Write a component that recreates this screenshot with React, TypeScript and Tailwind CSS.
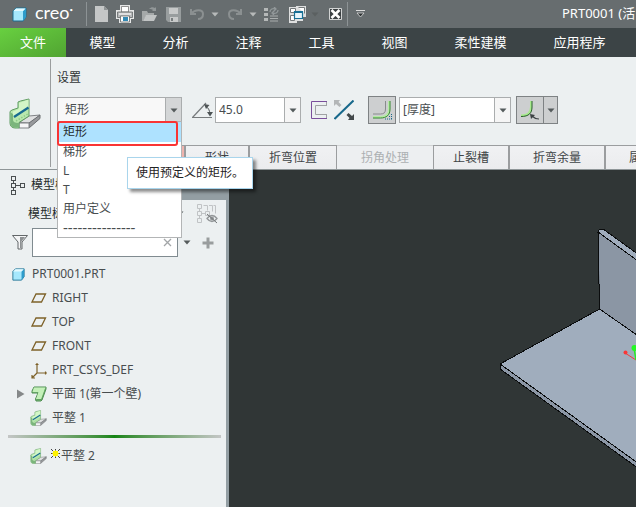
import type { ReactNode } from "react";

function Caret({ className = "text-[#555b5c]" }: { className?: string }) {
  return (
    <svg width="8" height="5" viewBox="0 0 8 5" className={className} aria-hidden="true">
      <path d="M0.5 0.5h7L4 4.5z" fill="currentColor" />
    </svg>
  );
}

function Tool({ label, children }: { label: string; children: ReactNode }) {
  return (
    <button type="button" aria-label={label} className="flex h-6 w-6 shrink-0 items-center justify-center">
      {children}
    </button>
  );
}

function More({ label, className }: { label: string; className: string }) {
  return (
    <button type="button" aria-label={label} className="flex h-6 w-3 shrink-0 items-center justify-center">
      <Caret className={className} />
    </button>
  );
}

function Cube({ size }: { size: number }) {
  return (
    <svg width={size} height={size} viewBox="0 0 15 15" aria-hidden="true" className="shrink-0">
      <path d="M1 4l3-3h10v9l-3 4H1z" fill="#a6e8fd" stroke="#1d6d8f" strokeWidth="1" strokeLinejoin="round" />
      <path d="M11 4l3-3v9l-3 4z" fill="#2e9ccb" />
      <path d="M1.500 4L4 1.500h9.500L11 4z" fill="#e4faff" />
    </svg>
  );
}

function FlatWall({ width, height }: { width: number; height: number }) {
  return (
    <svg width={width} height={height} viewBox="0 0 32 31" aria-hidden="true" className="shrink-0" strokeLinejoin="round">
      <path d="M10 24.500L20 18l11-1-10 8z" fill="#dfe0e1" stroke="#808386" />
      <path d="M20 25l11-8v3.500L20 30z" fill="#97999c" stroke="#6b6e71" />
      <path d="M10 25h10v5H10z" fill="#f6f6f7" stroke="#808386" />
      <path d="M1 13.500l2-1.500 6-2V4l2.500-1L20 1v17l-10 6.500V30H6c-3 0-5-2-5-5z" fill="#b9e8ae" stroke="#5f9c62" />
      <path d="M10 5l9.500-3.500V10L4 18v-4.500L10 11z" fill="#d3f6c7" />
      <path d="M1.500 14.500L4 16v6c0 2 2 3 6 3v4.500H6c-3 0-4.500-2-4.500-5z" fill="#7bb57c" />
      <path d="M5 19l14.500-9.500" stroke="#176b91" strokeWidth="2.200" />
      <path d="M7 23l12-7" stroke="#8fcb8a" strokeDasharray="1.500 1.500" strokeWidth="1.500" />
    </svg>
  );
}

function Plane() {
  return (
    <svg width="16" height="12" viewBox="0 0 16 12" aria-hidden="true" className="ml-px">
      <path d="M1 10L5 2h9.500l-4 8z" fill="none" stroke="#7d6128" strokeWidth="1.300" />
    </svg>
  );
}

function Csys() {
  return (
    <svg width="17" height="17" viewBox="0 0 17 17" aria-hidden="true" fill="none" stroke="#7d6128" strokeWidth="1.200" className="ml-px">
      <path d="M6 1v10h10M6 11L1 16M4.500 2.500h3M14.500 9.500v3M1 13v3h3" />
    </svg>
  );
}

function FirstWall() {
  return (
    <svg width="16" height="16" viewBox="0 0 16 16" aria-hidden="true" strokeLinejoin="round">
      <path d="M3 1h12v2l-4 11-1 1H5l-.5-2L7 7H1V5z" fill="#7dbb7b" stroke="#4d8c50" />
      <path d="M3 1.500h11.500L10.500 13H5l2.500-7H1.500z" fill="#c4f0b9" />
      <path d="M14.500 2.500L10.500 13.500H5.500" fill="none" stroke="#589a58" strokeWidth="0.800" />
    </svg>
  );
}

function Twisty() {
  return (
    <svg width="8" height="10" viewBox="0 0 8 10" aria-hidden="true">
      <path d="M0 0.500v9L7.500 5z" fill="#858889" />
    </svg>
  );
}

function NewMark() {
  return (
    <svg width="9" height="9" viewBox="0 0 9 9" aria-hidden="true" className="-mt-1.5 mr-px shrink-0" shapeRendering="crispEdges">
      <path d="M2 2h5v5H2z" fill="#fff200" />
      <path d="M0 0h1v1H0zM4 0h1v1H4zM8 0h1v1H8zM1 1h1v1H1zM7 1h1v1H7zM0 4h1v1H0zM8 4h1v1H8zM1 7h1v1H1zM7 7h1v1H7zM0 8h1v1H0zM4 8h1v1H4zM8 8h1v1H8z" fill="#444" />
      <path d="M4 1h1v1H4zM1 4h1v1H1zM7 4h1v1H7zM4 7h1v1H4z" fill="#c9bf00" />
    </svg>
  );
}

function TreeIcon() {
  return (
    <svg width="14" height="19" viewBox="0 0 14 19" aria-hidden="true" fill="none" stroke="#4b5052" shapeRendering="crispEdges">
      <path d="M0.500 0.500h4v4h-4zM0.500 7.500h4v4h-4zM0.500 14.500h4v4h-4zM9.500 7.500h4v4h-4zM2.500 5v2M2.500 12v2M5 9.500h4" />
    </svg>
  );
}

function TitleBar() {
  return (
    <header className="flex h-7 shrink-0 items-center overflow-hidden bg-[#676d6f] pl-3">
      <Cube size={15} />
      <div className="ml-2 h-7 w-11 shrink-0 font-[Lato] text-lg leading-6 text-white">
        creo<span className="align-super text-[6px] leading-none">•</span>
      </div>
      <div className="ml-[7px] mr-0.5 h-6 w-px shrink-0 bg-[#8d9395]" />
      <Tool label="新建">
        <svg width="13" height="16" viewBox="0 0 13 16"><path d="M0 0h9l4 4v12H0z" fill="#c5c7c7" /><path d="M9 0v4h4z" fill="#8f9495" /></svg>
      </Tool>
      <Tool label="打印">
        <svg width="18" height="18" viewBox="0 0 18 18">
          <path d="M4 0h10v5h4v9h-3v4H3v-4H0V5h4z" fill="#e6e7e7" />
          <path d="M5.500 1.500h7V7h-7z" fill="#fff" stroke="#777" strokeWidth="0.800" />
          <path d="M1.500 7h15v5.500h-15z" fill="#b7b9ba" stroke="#666a6b" strokeWidth="0.800" />
          <path d="M3 9h12" stroke="#eee" strokeWidth="1.500" />
          <path d="M4.500 11h9v6h-9z" fill="#fff" stroke="#666a6b" strokeWidth="0.800" />
          <path d="M7 12h5v4H7z" fill="#3289b4" />
        </svg>
      </Tool>
      <Tool label="打开">
        <svg width="17" height="16" viewBox="0 0 17 16">
          <path d="M1 15V5h5l1 2h6v3H5l-3 5z" fill="#a5a9a9" /><path d="M5 9h11l-3 6H2z" fill="#c1c4c4" />
          <path d="M8 3c2-2 4-2 6-1l1-1v4h-4l1-1c-1-1-2-1-4-1z" fill="#929798" />
        </svg>
      </Tool>
      <Tool label="保存">
        <svg width="15" height="15" viewBox="0 0 15 15"><path d="M0 0h15v15H2l-2-2z" fill="#989d9e" /><path d="M3 1h9v6H3z" fill="#c7c9c9" /><path d="M4 10h8v5H4z" fill="#c7c9c9" /><path d="M5 11h2v3H5z" fill="#777d7e" /></svg>
      </Tool>
      <Tool label="撤消">
        <svg width="16" height="12" viewBox="0 0 16 12" fill="none" stroke="#8b9091" strokeWidth="2"><path d="M2 1v5h5M2.500 5.500C6 1 14 1 14 6c0 3-2 5-5 5" /></svg>
      </Tool>
      <More label="撤消列表" className="text-[#b7baba]" />
      <div className="w-0.5 shrink-0" />
      <Tool label="重做">
        <svg width="16" height="12" viewBox="0 0 16 12" fill="none" stroke="#8b9091" strokeWidth="2"><path d="M14 1v5H9M13.500 5.500C10 1 2 1 2 6c0 3 2 5 5 5" /></svg>
      </Tool>
      <More label="重做列表" className="text-[#b7baba]" />
      <Tool label="重新生成">
        <svg width="15" height="15" viewBox="0 0 15 15">
          <path d="M0 1h4v3H0zM0 6h4v3H0zM0 11h4v3H0z" fill="#b5b8b8" />
          <path d="M6 9h8M6 11.500h8M6 14h8" stroke="#a9adad" />
          <path d="M6 5c0-3 3-4 5-3M14 3c0 3-3 4-5 3M10 0l2 2-2 2M10 4L8 6l2 2" fill="none" stroke="#92989a" strokeWidth="1.300" />
        </svg>
      </Tool>
      <div className="w-0.5 shrink-0" />
      <Tool label="窗口">
        <svg width="17" height="17" viewBox="0 0 17 17">
          <path d="M0 1h7V0h10v11h-3v4H8v2H0z" fill="#dedfdf" />
          <path d="M1.500 2.500h5v4h-5zM1.500 9.500h4v5h-4zM9.500 1.500h6v6" fill="#fff" stroke="#74797a" />
          <path d="M5.500 5.500h8v7h-8z" fill="#e8f5fb" stroke="#187096" strokeWidth="1.200" />
          <path d="M5 6h9" stroke="#187096" strokeWidth="2" />
        </svg>
      </Tool>
      <More label="窗口列表" className="text-[#5b6061]" />
      <div className="w-0.5 shrink-0" />
      <Tool label="关闭">
        <svg width="13" height="12" viewBox="0 0 13 12">
          <path d="M0.500 0.500h12v11H0.500z" fill="#3b4042" stroke="#d2d4d4" />
          <path d="M2.500 2l8 8M10.500 2l-8 8" stroke="#fff" strokeWidth="2.600" />
        </svg>
      </Tool>
      <div className="h-6 w-px shrink-0 bg-[#8d9395]" />
      <button type="button" aria-label="自定义快速访问工具栏" className="flex h-6 w-6 shrink-0 items-center justify-center">
        <svg width="9" height="8" viewBox="0 0 9 8"><path d="M0 0.500h9" stroke="#ddd" /><path d="M1 3h7L4.500 7z" fill="#303536" stroke="#ddd" strokeWidth="0.800" /></svg>
      </button>
      <h1 className="ml-[190px] shrink-0 whitespace-nowrap text-[13px] text-white">PRT0001 (活</h1>
    </header>
  );
}

function RibbonMenu() {
  return (
    <nav className="flex h-[29px] shrink-0 overflow-hidden bg-[#3c4446] text-[13px] text-white">
      <button type="button" className="w-[66px] shrink-0 bg-linear-to-br from-[#68d040] to-[#51a432]">文件</button>
      {["模型", "分析", "注释", "工具", "视图"].map((name) => (
        <button type="button" key={name} className="w-[73px] shrink-0">{name}</button>
      ))}
      {["柔性建模", "应用程序"].map((name) => (
        <button type="button" key={name} className="w-[99px] shrink-0">{name}</button>
      ))}
    </nav>
  );
}

function Combo({ label, value, className }: { label: string; value: string; className: string }) {
  return (
    <div className={"grid h-[26px] shrink-0 border border-[#aaadae] " + className}>
      <select aria-label={label} defaultValue={value} className="col-start-1 row-start-1 w-full appearance-none rounded-none pl-[3px] outline-none">
        <option>{value}</option>
      </select>
      <span className="pointer-events-none col-start-1 row-start-1 flex w-4 items-center justify-center justify-self-end border-l border-[#aaadae] bg-[#f5f5f5]">
        <Caret />
      </span>
    </div>
  );
}

function ShapeCombo() {
  return (
    <div className="relative shrink-0">
      <div className="grid h-[26px] w-[125px] border border-[#aaadae] bg-[#f8f8f8]">
        <select aria-label="形状" defaultValue="矩形" className="col-start-1 row-start-1 w-full appearance-none rounded-none pl-[7px] outline-none">
          <option>矩形</option>
        </select>
        <span className="pointer-events-none col-start-1 row-start-1 flex w-4 items-center justify-center justify-self-end border-l border-[#aaadae] bg-[#d4d6d7]">
          <Caret />
        </span>
      </div>
      <ul role="listbox" aria-label="形状选项" className="absolute left-0 top-6 z-10 w-[125px] border border-[#b3b5b6] bg-white leading-[19px]">
        <li role="option" aria-selected="true" className="h-5 bg-[#aee2ff] pl-[5px] text-[#252a2c]">矩形</li>
        {["梯形", "L", "T", "用户定义"].map((name) => (
          <li role="option" aria-selected="false" key={name} className="h-[19px] pl-[5px]">{name}</li>
        ))}
        <li role="option" aria-selected="false" className="h-[19px] pl-[5px] text-[15px]">---------------</li>
      </ul>
      <div className="pointer-events-none absolute left-0 top-6 z-20 h-[25px] w-[121px] rounded-[3px] border-2 border-[#f93434]" />
      <div role="tooltip" className="absolute left-[70px] top-[60px] z-30 flex h-8 w-[126px] items-center whitespace-nowrap border border-[#a9d5ec] bg-white pl-2 text-[#1f2324] shadow-[3px_3px_3px_rgba(0,0,0,0.45)]">
        使用预定义的矩形。
      </div>
    </div>
  );
}

function Ribbon() {
  const tab = "h-full shrink-0 border border-b-0 border-[#9b9d9f] bg-linear-to-b from-[#f0f1f3] to-[#ebecee] ";
  return (
    <section className="flex h-[113px] shrink-0 border-b border-[#8f9698]">
      <div className="flex w-[50px] shrink-0 items-center justify-center">
        <FlatWall width={32} height={31} />
      </div>
      <div className="mb-0.5 mt-0.5 w-px shrink-0 bg-[#9a9d9e]" />
      <div className="flex min-w-0 flex-1 flex-col">
        <h2 className="ml-1.5 mt-[9px] h-6 leading-6 text-[#303536]">设置</h2>
        <div className="ml-1.5 mt-1.5 flex h-7 items-center">
          <ShapeCombo />
          <svg width="22" height="18" viewBox="0 0 22 18" className="ml-2.5 mr-px shrink-0" fill="none" stroke="#4d5355" aria-hidden="true">
            <path d="M0 16.500h20M0.500 16.500L14 2" stroke="#777b7d" strokeWidth="1.200" />
            <path d="M13.500 5c3 2 4 4 4.500 8" />
            <path d="M12 3l5.500 1-3.500 4zM15 11h6l-3 4.500z" fill="#4d5355" stroke="none" />
          </svg>
          <div className="flex h-[26px] w-[86px] shrink-0 border border-[#aaadae] bg-white">
            <input aria-label="角度" defaultValue="45.0" className="w-[69px] min-w-0 flex-1 pl-[3px] outline-none" />
            <button type="button" aria-label="角度列表" className="flex w-4 items-center justify-center border-l border-[#aaadae] bg-[#f5f5f5]">
              <Caret />
            </button>
          </div>
          <button type="button" aria-label="草绘" className="ml-2.5 shrink-0">
            <svg width="16" height="18" viewBox="0 0 16 18" fill="none">
              <path d="M16 0.500H0.500v17H16" stroke="#7a4f9c" />
              <path d="M16 4.500H4.500v9H16M15.500 1v3.500M15.500 13.500V17" stroke="#a0a2a4" />
            </svg>
          </button>
          <button type="button" aria-label="反向" className="ml-[7px] shrink-0">
            <svg width="20" height="20" viewBox="0 0 20 20">
              <path d="M0.500 19L19.500 0.500" stroke="#17688b" strokeWidth="2" />
              <path d="M0 0h6L4.500 2l3 3-2 2-3.500-3-2 2z" fill="#b3b6b7" />
              <path d="M20 20h-6l1.500-2-3-3 2-2 3.500 3 2-2z" fill="#43494b" />
            </svg>
          </button>
          <button type="button" aria-label="内侧折弯" className="ml-3.5 flex size-7 shrink-0 items-center justify-center border border-[#7e8284] bg-[#cdcfd0]">
            <svg width="20" height="20" viewBox="0 0 20 20" fill="none">
              <path d="M13.500 1v8c0 3.500-1.500 5-5 5H1" stroke="#888b8d" />
              <path d="M17 1v8c0 5.500-3 8-8.500 8H1" stroke="#b5eaa5" strokeWidth="2" />
              <path d="M18 1v8c0 6-3.500 9-9.500 9H1" stroke="#34882f" />
              <path d="M13 19h7M17 16.500h3M19.500 14v6" stroke="#17688b" strokeDasharray="1 1" />
            </svg>
          </button>
          <Combo label="厚度" value="[厚度]" className="ml-[3px] w-28 bg-white" />
          <div className="ml-[5px] flex h-7 w-[42px] shrink-0 border border-[#7e8284] bg-[#cdcfd0]">
            <button type="button" aria-label="折弯半径" className="flex flex-1 items-center justify-center">
              <svg width="20" height="20" viewBox="0 0 20 20" fill="none">
                <path d="M11 1v6c0 6-3 8.500-10 8.500" stroke="#a8ea8f" strokeWidth="2" />
                <path d="M12 1v6c0 6-3 9.500-11 9.500" stroke="#285c2a" />
                <path d="M12 16c2 2 4 3 7 3" stroke="#3d4345" strokeWidth="1.200" />
                <path d="M10 14l5 1-4 4z" fill="#3d4345" />
              </svg>
            </button>
            <button type="button" aria-label="折弯半径列表" className="flex w-3.5 items-center justify-center border-l border-[#7e8284]">
              <Caret />
            </button>
          </div>
        </div>
        <div className="mt-auto flex h-6 overflow-hidden pl-[70px] text-[#3e4446]">
          <div className="h-full w-16 shrink-0 border border-b-0 border-[#9b9d9f] bg-[#efb3ae]" />
          <button type="button" className={tab + "w-16"}>形状</button>
          <button type="button" className={tab + "w-[88px]"}>折弯位置</button>
          <button type="button" disabled className="h-full w-24 shrink-0 border-t border-[#d0d2d3] bg-[#edeff1] text-[#acb0b2]">拐角处理</button>
          <button type="button" className={tab + "w-[76px]"}>止裂槽</button>
          <button type="button" className={tab + "w-24"}>折弯余量</button>
          <button type="button" className={tab + "w-[72px]"}>属性</button>
        </div>
      </div>
    </section>
  );
}

function Row({ icon, text, className = "pl-[30px]" }: { icon: ReactNode; text: string; className?: string }) {
  return (
    <li className={"flex h-6 items-center whitespace-nowrap " + className}>
      <span className="flex w-[22px] shrink-0 items-center">{icon}</span>
      {text}
    </li>
  );
}

function ModelTree() {
  return (
    <aside className="flex w-[229px] shrink-0 flex-col border-r-[3px] border-[#939ea3]">
      <div className="flex h-[30px] shrink-0 bg-[#939ea3]">
        <div className="flex w-36 items-center bg-[#ecf0f1] pl-[11px]">
          <TreeIcon />
          <span className="ml-1.5 text-[#252a2c]">模型树</span>
        </div>
      </div>
      <div className="flex h-[27px] shrink-0 items-center pl-7">
        <span className="shrink-0 whitespace-nowrap text-[#252a2c]">模型树</span>
        <span className="ml-28 w-3 shrink-0"><Caret /></span>
        <button type="button" aria-label="树过滤器" className="ml-[9px] shrink-0">
          <svg width="21" height="20" viewBox="0 0 21 20" fill="none" stroke="#c0c3c5">
            <path d="M0.500 0.500h4v4h-4zM0.500 7.500h4v4h-4zM0.500 14.500h4v4h-4zM2.500 5v2M2.500 12v2M5 9.500h3M8.500 7.500h4v4h-4zM6.500 1.500h4v5M12 1.500h3.500v6M16.500 1.500h2v8" />
            <path d="M10 14.500c3-4 7-4 10 0-3 4-7 4-10 0z" stroke="#939799" strokeWidth="1.300" />
            <circle cx="15" cy="14.500" r="2" fill="#939799" stroke="none" />
            <path d="M10 10l10 9" stroke="#737779" />
          </svg>
        </button>
      </div>
      <div className="flex h-[31px] shrink-0 items-center pl-3">
        <svg width="16" height="15" viewBox="0 0 16 15" className="mr-1 shrink-0" aria-hidden="true">
          <path d="M0.500 0.500h15L10 7v7H6V7z" fill="#f4f5f6" stroke="#626769" />
          <path d="M8 2h5L9.500 6.500V13H8z" fill="#8d9193" />
        </svg>
        <div className="flex h-[29px] w-[146px] shrink-0 items-center border border-[#808b90] bg-white">
          <input aria-label="搜索模型树" className="h-full min-w-0 flex-1 px-1 outline-none" />
          <button type="button" aria-label="清除" className="mr-[5px]">
            <svg width="9" height="9" viewBox="0 0 9 9" className="text-[#a2a5a7]"><path d="M1 1l7 7M8 1L1 8" stroke="currentColor" strokeWidth="1.300" /></svg>
          </button>
        </div>
        <button type="button" aria-label="搜索选项" className="ml-[5px]"><Caret /></button>
        <button type="button" aria-label="添加" className="ml-[11px]">
          <svg width="12" height="12" viewBox="0 0 12 12"><path d="M6 0.500v11M0.500 6h11" stroke="#999d9e" strokeWidth="3" /></svg>
        </button>
      </div>
      <ul className="mt-1">
        <li className="flex h-6 items-center pl-3">
          <span className="w-5"><Cube size={13} /></span>
          PRT0001.PRT
        </li>
        <Row icon={<Plane />} text="RIGHT" />
        <Row icon={<Plane />} text="TOP" />
        <Row icon={<Plane />} text="FRONT" />
        <Row icon={<Csys />} text="PRT_CSYS_DEF" />
        <li className="flex h-6 items-center pl-[17px]">
          <button type="button" aria-label="展开" className="w-3.5"><Twisty /></button>
          <span className="w-[21px]"><FirstWall /></span>
          平面 1(第一个壁)
        </li>
        <Row icon={<FlatWall width={17} height={16} />} text="平整 1" />
      </ul>
      <div className="ml-2 mr-[5px] mt-[5px] h-[3px] shrink-0 bg-linear-to-r from-[#c4c6c6] via-[#138513] to-[#c4c6c6]" />
      <ul className="mt-1.5">
        <li className="flex h-6 items-center pl-[30px]">
          <span className="w-[21px] shrink-0"><FlatWall width={17} height={16} /></span>
          <NewMark />
          平整 2
        </li>
      </ul>
    </aside>
  );
}

function Viewport() {
  return (
    <main className="min-w-0 flex-1 overflow-hidden bg-[#303636]">
      <svg viewBox="229 170 407 337" preserveAspectRatio="xMinYMin slice" className="block size-full" role="img" aria-label="三维模型">
        <path d="M599.500 309L500 364l160 115V351z" fill="#a0adbd" />
        <path d="M500 364v5l160 115v-5z" fill="#8c97a6" />
        <path d="M598 232l2 77 60 43v-75z" fill="#8b96a4" />
        <path d="M598 232l1-2 4-1 57 41v7z" fill="#a0adbd" />
        <path d="M660 351l-60.500-42L500 364v5l160 115M500 364l160 115M599.500 309L598 232l1-2 4-1 57 41M598 232l62 45" fill="none" stroke="#0a0c0d" strokeWidth="1" shapeRendering="crispEdges" />
        <path d="M625 353l11 7" stroke="#f33a3a" />
        <path d="M634 348l2 12" stroke="#24f024" strokeWidth="1.500" />
        <circle cx="625.500" cy="352.500" r="2" fill="#fa3636" />
        <circle cx="634.500" cy="348" r="3" fill="#24f924" />
      </svg>
    </main>
  );
}

export default function App() {
  return (
    <div className="flex h-screen flex-col overflow-hidden bg-[#ecf0f1] font-['Noto_Sans','Noto_Sans_CJK_SC',sans-serif] text-xs text-[#484d4f]">
      <TitleBar />
      <RibbonMenu />
      <Ribbon />
      <div className="flex min-h-0 flex-1">
        <ModelTree />
        <Viewport />
      </div>
    </div>
  );
}
